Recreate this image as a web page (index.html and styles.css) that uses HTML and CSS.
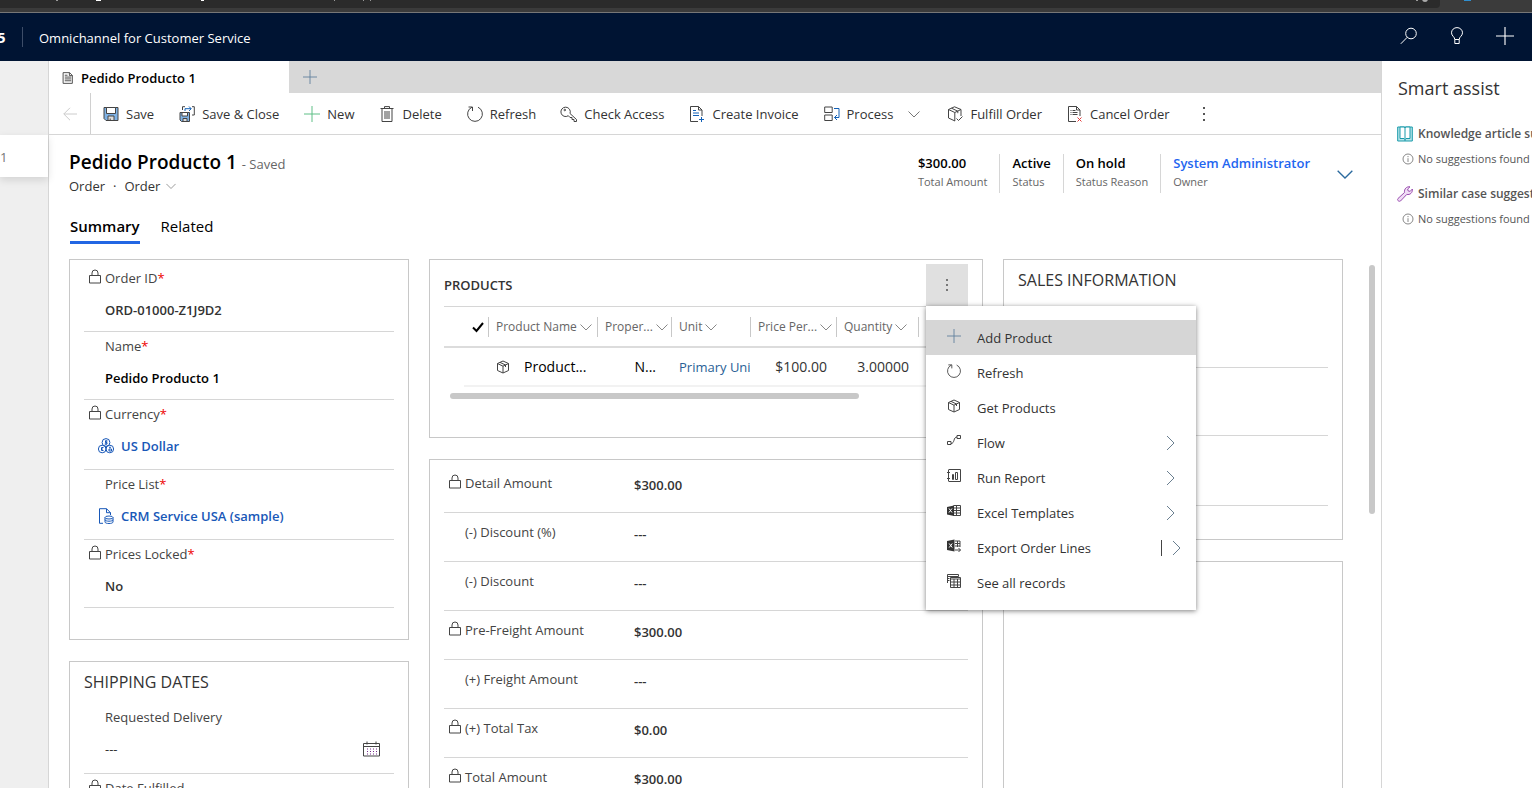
FILE: index.html
```html
<!DOCTYPE html>
<html lang="en">
<head>
<meta charset="utf-8">
<title>Pedido Producto 1 - Omnichannel for Customer Service</title>
<link rel="stylesheet" href="styles.css">
</head>
<body>
<svg class="sprite" aria-hidden="true">
  <symbol id="plus" viewBox="0 0 16 16"><path d="M8 0v16M0 8h16"/></symbol>
  <symbol id="chev" viewBox="0 0 12 12"><path d="M.5 3.500 6 9l5.500-5.500"/></symbol>
  <symbol id="next" viewBox="0 0 10 16"><path d="m1 1 7 7-7 7"/></symbol>
  <symbol id="lock" viewBox="0 0 12 15"><path d="M.5 6.500h11v7.500H.5zM3 6.500V4a3 3 0 0 1 6 0v2.500"/></symbol>
  <symbol id="refresh" viewBox="0 0 16 16"><path d="M11 1.200A7.400 7.400 0 1 1 5 1.200M1.500 1H5.500V5"/></symbol>
  <symbol id="cube" viewBox="0 0 14 14"><path d="M7 1l5.500 2.500v7L7 13l-5.500-2.500v-7zM1.500 3.500 7 6.200l5.500-2.700M7 6.200V13M4 2.400l5.500 2.600v2"/></symbol>
  <symbol id="info" viewBox="0 0 12 12"><circle cx="6" cy="6" r="5"/><path d="M6 5.200V9M6 3v1.200"/></symbol>
</svg>

<div class="browser" aria-hidden="true">
  <div class="address">
    <svg class="flecks" viewBox="0 0 1440 8"><path d="M56 0h2v1h-2zM334 0h1v1h-1zM363 0h1v1h-1zM370 0h1v1h-1zM1416 0h2v1h-2z" fill="#999"/><path d="M96 0h5v1h-5zM201 0h3v1h-3z" fill="#fff"/><circle cx="1425" cy="-1" r="3" fill="#aaa"/></svg>
  </div>
  <span class="profile"></span>
</div>

<header class="topbar">
  <span class="brand">5</span>
  <span class="app-name">Omnichannel for Customer Service</span>
  <div class="top-actions">
    <button type="button" aria-label="Search"><svg class="i18" viewBox="0 0 18 18"><circle cx="11" cy="6.500" r="5.300"/><path d="M7.200 10.300.8 16.800"/></svg></button>
    <button type="button" aria-label="Ideas"><svg class="i18" viewBox="0 0 18 18"><path d="M6.800 12.500C6.800 9.800 3.500 9 3.500 5.800a5.500 5.200 0 0 1 11 0c0 3.200-3.300 4-3.300 6.700zM6.800 12.500V16.500h4.400v-4"/></svg></button>
    <button type="button" aria-label="New"><svg class="i18"><use href="#plus"/></svg></button>
  </div>
</header>

<div class="workspace">
  <nav class="sessions" aria-label="Sessions"><a class="session" href="#">1</a></nav>

  <main class="page">
    <div class="tabstrip">
      <div class="apptab">
        <svg class="i12" viewBox="0 0 12 13"><path d="M.7.700h7l3 3v8.600H.7zM7.500.700v3.200h3.200M2.500 3.500h3M2.500 5.500h7M2.500 7.500h7M2.500 9.500h7"/></svg>
        <span>Pedido Producto 1</span>
      </div>
      <button class="newtab" type="button" aria-label="New tab"><svg class="i14 blue"><use href="#plus"/></svg></button>
    </div>

    <div class="commands">
      <button class="back" type="button" aria-label="Back"><svg class="i14" viewBox="0 0 14 14"><path d="M14 7H.8M7 .8.8 7 7 13.200"/></svg></button>
      <button type="button"><svg class="i16" viewBox="0 0 16 16"><path d="M1 1.500h14v13H3l-2-2z" fill="#7fb2e5"/><path d="M3.500 1.500h9v6h-9z" fill="#fff"/><path d="M5 14.500V10h6v4.500z" fill="#ddd"/><path d="M7.200 12.500v2"/></svg>Save</button>
      <button type="button"><svg class="i16" viewBox="0 0 16 16"><path d="M1 6.500h9.500v9H2.500L1 14z" fill="#7fb2e5"/><path d="M3 6.500h5.500v3.500H3z" fill="#fff"/><path d="M4 15.500V12.500h4v3z" fill="#ddd"/><path d="M3.500 4V.7H6M13 .7h2.300V9H13"/><path d="M6 5V2.700h6M10 .5l2.200 2.200L10 5" stroke="#1160b7"/></svg>Save &amp; Close</button>
      <button type="button"><svg class="i16 green"><use href="#plus"/></svg>New</button>
      <button type="button"><svg class="i16" viewBox="0 0 16 16"><path d="M1.500 2.500h13M5.500 2.500V.6h5v1.900M3 2.500v13h10v-13M6 5v8M8 5v8M10 5v8"/></svg>Delete</button>
      <button type="button"><svg class="i16"><use href="#refresh"/></svg>Refresh</button>
      <button type="button"><svg class="i16" viewBox="0 0 16 16"><path d="M9 7.500l6.500 6v2h-2.500v-2h-2v-2H9L7.300 9.700A4.700 4.700 0 1 1 9 7.500z"/><circle cx="3.800" cy="4" r=".8"/></svg>Check Access</button>
      <button type="button"><svg class="i16" viewBox="0 0 16 16"><path d="M9 15.500H1.500V.5h8l3.500 3.500v6M9.500.5V4H13"/><path d="M4 4.500h3M4 7h6M4 9.500h6M12.500 11v5M10 13.500h5" stroke="#1160b7"/></svg>Create Invoice</button>
      <button type="button"><svg class="i16" viewBox="0 0 16 16"><path d="M.7 1h7.500v5.500H.7zM.7 9h7.500v5.500H.7z"/><path d="M10 2.500h5v9h-4.500M13 9l-2.500 2.500L13 14" stroke="#1160b7"/></svg>Process<svg class="i12 process-chev"><use href="#chev"/></svg></button>
      <button type="button"><svg class="i16" viewBox="0 0 16 16"><path d="M8 15 1.500 12V3.500L7.500.8l6.500 2.700V10M1.500 3.500 7.800 6.500l6.200-3M7.800 6.500V15M4.500 2.200l6.300 3v2M9.500 12.500l2 2 4-4"/></svg>Fulfill Order</button>
      <button type="button"><svg class="i16" viewBox="0 0 16 16"><path d="M9 15.500H1.500V.5h8l3.500 3.500v6M9.500.5V4H13M3.500 4.500h1M5.500 4.500h3M3.500 6.500h1M5.500 6.500h5M3.500 8.500h1M5.500 8.500h5"/><path d="m10.500 11.500 4 4M14.500 11.500l-4 4" stroke="#e03c3c"/></svg>Cancel Order</button>
      <button type="button" class="overflow" aria-label="More commands"><span class="dots"></span></button>
    </div>

    <section class="record">
      <div class="record-title">
        <h1>Pedido Producto 1 <small>- Saved</small></h1>
        <div class="crumb"><span>Order</span><span>·</span><button type="button">Order<svg class="i10"><use href="#chev"/></svg></button></div>
      </div>
      <dl class="facts">
        <div><dd>$300.00</dd><dt>Total Amount</dt></div>
        <div><dd>Active</dd><dt>Status</dt></div>
        <div><dd>On hold</dd><dt>Status Reason</dt></div>
        <div><dd><a href="#">System Administrator</a></dd><dt>Owner</dt></div>
      </dl>
      <button class="expand" type="button" aria-label="Expand header"><svg class="i16"><use href="#chev"/></svg></button>
    </section>

    <nav class="formtabs"><a class="current" href="#">Summary</a><a href="#">Related</a></nav>

    <div class="form">
      <div class="column">
        <section class="card order-card">
          <div class="field"><label class="locked" for="oid"><svg class="lock"><use href="#lock"/></svg>Order ID<b>*</b></label><input id="oid" readonly value="ORD-01000-Z1J9D2"></div>
          <div class="field"><label for="nm">Name<b>*</b></label><input id="nm" class="strong" value="Pedido Producto 1"></div>
          <div class="field lookup"><span class="label locked"><svg class="lock"><use href="#lock"/></svg>Currency<b>*</b></span><a href="#"><svg class="i16" viewBox="0 0 16 16"><circle cx="8" cy="4.500" r="3.900"/><circle cx="4.200" cy="11" r="3.800"/><circle cx="11.800" cy="11" r="3.800"/><path d="M9.500 3H7.500v1.500h1.500V6H6.700M8 2v5M5.500 9.500H3.500v3h2M3 11h2M11 9.300h2M11 11h2.500v2H11z"/></svg>US Dollar</a></div>
          <div class="field lookup"><span class="label">Price List<b>*</b></span><a href="#"><svg class="i16" viewBox="0 0 16 16"><path d="M5 15.300H1.500V.7h7l4 4V7M8.500.7v4h4"/><ellipse cx="11" cy="9.500" rx="4" ry="1.500"/><path d="M7 9.500V14c0 2 8 2 8 0V9.500M7 11.700c0 2 8 2 8 0"/></svg>CRM Service USA (sample)</a></div>
          <div class="field"><label class="locked" for="pl"><svg class="lock"><use href="#lock"/></svg>Prices Locked<b>*</b></label><input id="pl" readonly value="No"></div>
        </section>
        <section class="card titled">
          <h2>SHIPPING DATES</h2>
          <div class="field date-field"><label for="rd">Requested Delivery</label>
            <div class="date"><input id="rd" class="plain" value="---"><button type="button" aria-label="Pick a date"><svg class="calendar" viewBox="0 0 17 16"><path d="M.5 2.500h16v12.500H.5zM.5 5.500h16M4 .5v3M13 .5v3"/><path d="M4 8h10M4 10.500h10M4 13h10" stroke-dasharray="1 2" stroke="#742a8c"/></svg></button></div>
          </div>
          <div class="field"><label class="locked" for="df"><svg class="lock"><use href="#lock"/></svg>Date Fulfilled</label><input id="df" readonly value="---"></div>
        </section>
      </div>

      <div class="column">
        <section class="card products">
          <div class="products-head">
            <h3>PRODUCTS</h3>
            <div class="more-wrap">
              <button class="more" type="button" aria-label="More commands for Products" aria-expanded="true"><span class="dots"></span></button>
              <ul class="menu">
                <li><button type="button" class="hot"><svg class="i14 blue"><use href="#plus"/></svg>Add Product</button></li>
                <li><button type="button"><svg class="i14"><use href="#refresh"/></svg>Refresh</button></li>
                <li><button type="button"><svg class="i14"><use href="#cube"/></svg>Get Products</button></li>
                <li><button type="button"><svg class="i14" viewBox="0 0 14 14"><path d="M.5 7.500h3.500v3H.5zM10 1.500h3.500v3H10zM4 9.500c4 0 2-6.500 6-6.500"/></svg>Flow<svg class="next"><use href="#next"/></svg></button></li>
                <li><button type="button"><svg class="i14" viewBox="0 0 14 14"><path d="M2 .5h11.500v12H2M1.500.5v12M0 3.500h3M0 9.500h3M5.500 5.500h1v5h-1zM8.500 3.500h2v7h-2z"/></svg>Run Report<svg class="next"><use href="#next"/></svg></button></li>
                <li><button type="button"><svg class="i14" viewBox="0 0 14 14"><path d="M6.500 1.500h7v10h-7M9.500 1.500v10M7 4h6.500M7 6.500h6.500M7 9h6.500"/><path d="M0 3l7-1.500v10.500L0 10.500z" fill="#333" stroke="none"/><path d="m2 4.500 3 4M5 4.500l-3 4" stroke="#fff"/></svg>Excel Templates<svg class="next"><use href="#next"/></svg></button></li>
                <li class="split"><button type="button"><svg class="i14" viewBox="0 0 14 14"><path d="M8 2h5M8 4.500h5M8 7h5M10.500 2v6M13 2v6M8 11h5.500M11.500 9l2 2-2 2"/><path d="M0 2l7.500-1.500v12L0 11z" fill="#333" stroke="none"/><path d="m2.200 4.500 3 4M5.200 4.500l-3 4" stroke="#fff"/></svg>Export Order Lines</button><button type="button" class="sub" aria-label="Export options"><svg class="next"><use href="#next"/></svg></button></li>
                <li><button type="button"><svg class="i14" viewBox="0 0 14 14"><path d="M.5 9V.5h11v2M.5 2.500h11M.5 4.500h2M.5 6.500h2M3.500 3.500h10v10h-10zM3.500 5h10M3.500 8h10M3.500 11h10M7 5v8.500M10.500 5v8.500"/></svg>See all records</button></li>
              </ul>
            </div>
          </div>
          <table>
            <colgroup><col class="c-gap"><col class="c-check"><col class="c-name"><col class="c-prop"><col class="c-unit"><col class="c-price"><col class="c-qty"><col></colgroup>
            <thead><tr>
              <th></th>
              <th class="tick"><svg class="i12" viewBox="0 0 12 12"><path d="m1 6.500 3.500 3.500L11 2"/></svg></th>
              <th><span>Product Name<svg class="i12"><use href="#chev"/></svg></span></th>
              <th><span>Proper...<svg class="i12"><use href="#chev"/></svg></span></th>
              <th><span>Unit<svg class="i12"><use href="#chev"/></svg></span></th>
              <th><span>Price Per...<svg class="i12"><use href="#chev"/></svg></span></th>
              <th><span>Quantity<svg class="i12"><use href="#chev"/></svg></span></th>
              <th><span></span></th>
            </tr></thead>
            <tbody><tr>
              <td></td><td></td>
              <td class="name"><span><svg class="i14"><use href="#cube"/></svg>Product...</span></td>
              <td class="num prop">N...</td>
              <td class="unit"><a href="#">Primary Uni</a></td>
              <td class="num">$100.00</td>
              <td class="num">3.00000</td>
              <td></td>
            </tr></tbody>
          </table>
          <div class="hscroll"></div>
        </section>

        <section class="card amounts">
          <div class="row"><label class="locked" for="a1"><svg class="lock"><use href="#lock"/></svg>Detail Amount</label><input id="a1" readonly value="$300.00"></div>
          <div class="row"><label for="a2">(-) Discount (%)</label><input id="a2" value="---"></div>
          <div class="row"><label for="a3">(-) Discount</label><input id="a3" value="---"></div>
          <div class="row"><label class="locked" for="a4"><svg class="lock"><use href="#lock"/></svg>Pre-Freight Amount</label><input id="a4" readonly value="$300.00"></div>
          <div class="row"><label for="a5">(+) Freight Amount</label><input id="a5" value="---"></div>
          <div class="row"><label class="locked" for="a6"><svg class="lock"><use href="#lock"/></svg>(+) Total Tax</label><input id="a6" readonly value="$0.00"></div>
          <div class="row"><label class="locked" for="a7"><svg class="lock"><use href="#lock"/></svg>Total Amount</label><input id="a7" readonly value="$300.00"></div>
        </section>
      </div>

      <div class="column">
        <section class="card titled sales">
          <h2>SALES INFORMATION</h2>
          <div class="field"></div><div class="field"></div><div class="field lookup"></div>
        </section>
        <section class="card blank"></section>
      </div>
      <div class="vscroll"></div>
    </div>
  </main>

  <aside class="assist">
    <h2>Smart assist</h2>
    <section>
      <h3><svg class="i16 teal" viewBox="0 0 16 16"><path d="M.7 1h14.600v14H.7z" fill="#b9e5ea"/><path d="M3 1h4.200L8 2l.8-1H13v11.500H9L8 13.500l-1-1H3z" fill="#fff"/><path d="M8 2v13"/></svg>Knowledge article suggestions</h3>
      <p><svg class="i12"><use href="#info"/></svg>No suggestions found for this record</p>
    </section>
    <section>
      <h3><svg class="i16 purple" viewBox="0 0 16 16"><path d="M1 12.500 7.500 6.500C7 3 9.500.3 13 .8L10.700 3l.5 2 2 .3L15.400 3c.4 3.700-2.400 6.200-5.600 5.400L3.500 15c-1.800 1-3.800-1-2.500-2.500z" fill="#f0dcf5"/></svg>Similar case suggestions</h3>
      <p><svg class="i12"><use href="#info"/></svg>No suggestions found for this record</p>
    </section>
  </aside>
</div>
</body>
</html>
```
FILE: styles.css
```css
* { box-sizing: border-box; }
body {
  margin: 0;
  height: 100vh;
  overflow: hidden;
  display: flex;
  flex-direction: column;
  background: #fff;
  color: #333;
  font: 13px/20px "Open Sans", "Noto Sans", sans-serif;
}
button, input { font: inherit; color: inherit; background: none; border: 0; padding: 0; margin: 0; }
h1, h2, h3, p, ul, dl, dd { margin: 0; padding: 0; }
ul { list-style: none; }
a { color: inherit; text-decoration: none; }
svg { fill: none; stroke: #444; stroke-width: 1; flex: none; display: block; overflow: visible; }
.sprite { position: absolute; width: 0; height: 0; }
.i10 { width: 10px; height: 10px; }
.i12 { width: 12px; height: 12px; }
.i14 { width: 14px; height: 14px; }
.i16 { width: 16px; height: 16px; }
.i18 { width: 18px; height: 18px; }
.blue { stroke: #5f7f9c; }
.green { stroke: #5fbf86; }
.teal { stroke: #1a9bab; }
.purple { stroke: #9a4fb0; }

/* Browser chrome */
.browser { flex: none; height: 13px; background: #3b3b3b; border-bottom: 1px solid #777; display: flex; gap: 24px; overflow: hidden; }
.address { flex: 0 1 1440px; height: 8px; background: #2b2b2b; border-radius: 0 0 4px 0; }
.flecks { width: 100%; height: 8px; stroke: none; }
.profile { width: 7px; height: 1px; background: #2f8fd0; }

/* App bar */
.topbar { flex: none; height: 48px; background: #001433; color: #fff; display: flex; align-items: center; padding-right: 18px; }
.brand { width: 23px; height: 20px; border-right: 1px solid #3d4d68; font-size: 15px; font-weight: 700; text-indent: -3px; margin-right: 16px; }
.app-name { flex: 1; padding-top: 2px; }
.top-actions { display: flex; gap: 30px; padding-bottom: 2px; }
.top-actions svg { stroke: #fff; }

.workspace { flex: 1; min-height: 0; display: flex; }
.sessions { flex: none; width: 49px; background: #efefef; border-right: 1px solid #d6d6d6; padding-top: 74px; }
.session { display: flex; align-items: center; height: 42px; padding-top: 2px; background: #fff; box-shadow: 0 3px 8px rgba(0, 0, 0, .12); color: #777; }

.page { flex: 1; min-width: 0; display: flex; flex-direction: column; }
.tabstrip { flex: none; height: 32px; background: #d8d8d8; display: flex; }
.apptab { width: 240px; background: #fff; color: #000; font-weight: 600; display: flex; align-items: center; gap: 7px; padding: 2px 13px 0; }
.newtab { padding: 0 14px; }

/* Command bar */
.commands { flex: none; height: 42px; border-bottom: 1px solid #d6d6d6; display: flex; align-items: center; gap: 25px; }
.commands button { display: flex; align-items: center; gap: 7px; height: 41px; white-space: nowrap; }
.commands .back { width: 42px; padding-left: 14px; border-right: 1px solid #d0d0d0; margin-right: -13px; }
.back svg { stroke: #ccc; }
.commands .process-chev { margin: 0 2px 0 8px; stroke: #777; }
.dots { width: 2px; height: 14px; margin: 0 auto; display: block; background: repeating-linear-gradient(#555 0 2px, transparent 2px 6px); }
.commands .overflow { padding-left: 8px; }

/* Record header */
.record { flex: none; display: flex; align-items: flex-start; padding: 15px 28px 0 20px; }
.record-title { flex: 1; }
h1 { font-size: 19px; line-height: 24px; font-weight: 600; color: #000; }
h1 small { font-size: 13px; font-weight: 400; color: #666; }
.crumb { display: flex; gap: 8px; line-height: 20px; font-weight: 500; }
.crumb button { display: flex; align-items: center; gap: 6px; }
.crumb svg { stroke: #888; }
.facts { display: flex; padding-top: 4px; }
.facts div { display: flex; flex-direction: column; border-left: 1px solid #d6d6d6; padding: 0 12px; height: 39px; }
.facts div:first-child { border: 0; }
.facts dd { color: #000; font-weight: 600; line-height: 20px; margin-top: -1px; }
.facts dt { font-size: 11px; line-height: 18px; color: #666; }
.facts a { color: #1f66f0; }
.expand { padding: 16px 0 0 15px; }
.expand svg { stroke: #2b6a9e; }

.formtabs { flex: none; display: flex; gap: 21px; padding: 18px 21px 15px; font-size: 15px; line-height: 24px; color: #000; }
.formtabs a { height: 30px; }
.formtabs .current { font-weight: 600; border-bottom: 3px solid #2266e3; }

/* Form grid */
.form {
  flex: 1; min-height: 0; position: relative; overflow: hidden;
  display: grid; grid-template-columns: minmax(0, 340fr) minmax(0, 554fr) minmax(0, 340fr);
  gap: 20px; padding: 0 38px 0 20px;
}
.column { display: flex; flex-direction: column; gap: 21px; }
.card { border: 1px solid #c8c8c8; padding: 4px 14px 0; }
.card h2 { font-size: 16px; line-height: 40px; font-weight: 400; white-space: nowrap; }
.titled { padding-top: 0; }
.order-card { padding-bottom: 31px; }
.field { height: 68px; border-bottom: 1px solid #d6d6d6; padding-left: 21px; }
.field.lookup { height: 70px; }
.field.date-field { height: 72px; padding-top: 1px; }
.field label, .field .label { display: flex; align-items: center; height: 28px; color: #444; }
label b, .label b { color: #e00; font-weight: 400; }
.locked .lock { margin: -4px 4px 0 -16px; }
.lock { width: 12px; height: 15px; }
.field input { width: 100%; height: 36px; font-weight: 600; display: block; }
.field input.strong { color: #000; }
.field input.plain { font-weight: 400; }
.field a { display: flex; align-items: center; gap: 7px; height: 36px; color: #1858b8; font-weight: 600; margin-left: -7px; }
.field a svg { stroke: #1858b8; }
.date { display: flex; align-items: center; padding-right: 14px; }
.calendar { width: 17px; height: 16px; }

/* Products grid */
.products { height: 179px; }
.products-head { height: 43px; display: flex; justify-content: space-between; border-bottom: 1px solid #d6d6d6; }
.products h3 { font-size: 13px; font-weight: 600; line-height: 42px; }
.more-wrap { position: relative; }
.more { width: 42px; height: 42px; background: #e0e0e0; }
.more .dots { height: 12px; background: repeating-linear-gradient(#777 0 2px, transparent 2px 5px); }
table { width: 100%; table-layout: fixed; border-collapse: collapse; }
.c-gap { width: 20px; } .c-check { width: 24px; } .c-name { width: 109px; } .c-prop { width: 74px; }
.c-unit { width: 79px; } .c-price { width: 86px; } .c-qty { width: 82px; }
th, td { padding: 0; font-weight: 400; text-align: left; white-space: nowrap; overflow: hidden; }
thead tr { height: 40px; border-bottom: 2px solid #dcdcdc; }
th span { display: flex; align-items: center; justify-content: flex-start; gap: 3px; height: 20px; padding-left: 7px; border-left: 1px solid #c8c8c8; font-size: 12px; color: #666; }
th span svg { stroke: #888; }
.tick svg { stroke: #000; stroke-width: 2; margin-left: 8px; }
tbody tr { height: 39px; font-size: 14px; }
tbody td:not(:first-child) { border-bottom: 2px solid #f2f2f2; }
.name span { display: flex; align-items: center; gap: 14px; padding-left: 8px; color: #000; }
.num { text-align: right; padding-right: 9px; }
.prop { padding-right: 15px; color: #000; }
.unit { padding-left: 8px; font-size: 13px; color: #2a5f96; }
.hscroll { width: 78%; height: 6px; margin: 6px 6px 0; border-radius: 3px; background: #c8c8c8; }

.menu {
  position: absolute; z-index: 5; top: 42px; left: 0; width: 270px; padding: 14px 0 10px;
  background: #fff; box-shadow: 0 1px 5px rgba(0, 0, 0, .5);
}
.menu li { display: flex; }
.menu button { flex: 1; height: 35px; display: flex; align-items: center; gap: 16px; padding: 0 20px 0 21px; text-align: left; white-space: nowrap; }
.menu .i14 { margin-bottom: 4px; }
.menu .hot { background: #d6d6d6; }
.next { width: 10px; height: 16px; margin-left: auto; }
.menu .next { stroke: #6a7f90; }
.menu .split { align-items: center; }
.menu .sub { flex: none; height: 16px; border-left: 1px solid #444; padding: 0 14px 0 10px; }

.amounts { flex: none; }
.row { display: flex; height: 49px; border-bottom: 1px solid #d6d6d6; padding-left: 21px; }
.row label { width: 169px; flex: none; display: flex; align-items: center; height: 38px; color: #444; }
.row input { flex: 1; min-width: 0; height: 42px; font-weight: 600; }

.sales { padding-bottom: 33px; }
.blank { flex: 1; }
.vscroll { position: absolute; top: 6px; right: 6px; width: 6px; height: 249px; border-radius: 3px; background: #c8c8c8; }

/* Smart assist pane */
.assist { flex: none; width: 151px; border-left: 1px solid #d6d6d6; padding: 14px 0 0 15px; overflow: hidden; white-space: nowrap; }
.assist h2 { font-size: 18px; line-height: 26px; font-weight: 400; margin: 0 0 20px 1px; }
.assist section { height: 60px; }
.assist h3 { display: flex; align-items: center; gap: 5px; height: 26px; font-size: 12px; font-weight: 600; color: #555; }
.assist p { display: flex; align-items: center; gap: 4px; height: 24px; padding-left: 5px; font-size: 11px; color: #555; }
.assist p svg { stroke: #888; }
```
